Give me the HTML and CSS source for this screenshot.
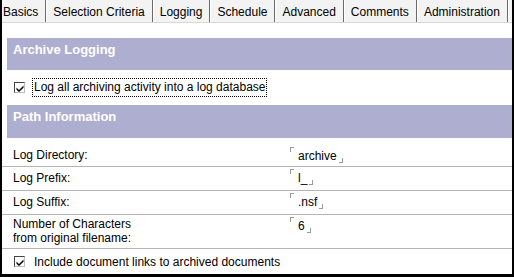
FILE: index.html
```html
<!DOCTYPE html>
<html lang="en">
<head>
  <meta charset="UTF-8" />
  <title>Archive Settings - Logging</title>
  <link rel="stylesheet" href="styles.css">
</head>
<body>
  <div class="frame">
    <div class="tabs">
      <div class="tab first">Basics</div>
      <div class="tab">Selection Criteria</div>
      <div class="tab active">Logging</div>
      <div class="tab">Schedule</div>
      <div class="tab">Advanced</div>
      <div class="tab">Comments</div>
      <div class="tab">Administration</div>
    </div>

    <div class="content">
      <div class="band">Archive Logging</div>
      <div class="check-row main-check">
        <span class="checkbox"><svg width="8" height="8" viewBox="0 0 8 8"><path d="M0.5 3.5 L3 6 L7.5 1.5 L7.5 3.8 L3 8 L0.5 5.8 Z" fill="#000"/></svg></span>
        <span class="focus">Log all archiving activity into a log database</span>
      </div>

      <div class="band second">Path Information</div>
      <div class="row first-row">
        <div class="label">Log Directory:</div>
        <div class="value"><span class="tl"></span>archive<span class="br"></span></div>
      </div>
      <div class="row">
        <div class="label">Log Prefix:</div>
        <div class="value"><span class="tl"></span>l_<span class="br"></span></div>
      </div>
      <div class="row">
        <div class="label">Log Suffix:</div>
        <div class="value"><span class="tl"></span>.nsf<span class="br"></span></div>
      </div>
      <div class="row tall">
        <div class="label">Number of Characters<br>from original filename:</div>
        <div class="value"><span class="tl"></span>6<span class="br"></span></div>
      </div>
      <div class="check-row last">
        <span class="checkbox"><svg width="8" height="8" viewBox="0 0 8 8"><path d="M0.5 3.5 L3 6 L7.5 1.5 L7.5 3.8 L3 8 L0.5 5.8 Z" fill="#000"/></svg></span>
        <span>Include document links to archived documents</span>
      </div>
    </div>
  </div>
</body>
</html>
```

FILE: styles.css
```css
html, body {
  margin: 0;
  padding: 0;
}
body {
  font-family: "Liberation Sans", Arial, sans-serif;
  font-size: 12px;
  color: #000;
  background: #fff;
}
.frame {
  width: 514px;
  height: 277px;
  box-sizing: border-box;
  border-left: 2px solid #000;
  border-right: 2px solid #000;
  border-bottom: 3px solid #000;
  display: flex;
  flex-direction: column;
  overflow: hidden;
}
.tabs {
  display: flex;
  flex: none;
  height: 22px;
  background: #f3f3f3;
  border-bottom: 1px solid #d8d8d8;
  margin-left: -2px;
}
.tab {
  flex: none;
  white-space: nowrap;
  padding: 0 7px 0 6px;
  line-height: 24px;
  font-size: 12px;
  border-right: 1px solid #6a6a6a;
  box-shadow: 1px 0 0 #fff;
  margin-right: 1px;
}
.tab.first {
  padding-left: 3px;
}
.content {
  flex: none;
  padding-top: 15px;
}
.band {
  margin-left: 5px;
  height: 32px;
  background: #aeaed0;
  color: #fff;
  font-weight: bold;
  font-size: 13px;
  padding: 4px 0 0 6px;
  box-sizing: border-box;
}
.band.second {
  height: 33px;
}
.check-row {
  display: flex;
  align-items: center;
  gap: 8px;
  padding-left: 12px;
}
.main-check {
  height: 35px;
}
.check-row.last {
  height: 25px;
  border-top: 1px solid #b4b4b4;
  gap: 9px;
}
.checkbox {
  width: 11px;
  height: 11px;
  box-sizing: border-box;
  border: 1px solid #444;
  border-right-color: #bbb;
  border-bottom-color: #bbb;
  background: #fff;
  display: flex;
  align-items: center;
  justify-content: center;
}
.focus {
  border: 1px dotted #000;
  padding: 1px 1px 2px 1px;
  margin-left: -1px;
}
.row {
  display: flex;
  height: 23px;
  border-top: 1px solid #b4b4b4;
}
.row.first-row {
  border-top: none;
  height: 28px;
}
.row.tall {
  height: 33px;
}
.label {
  width: 277px;
  padding: 4px 0 0 11px;
  line-height: 14px;
}
.row.first-row .label {
  padding-top: 10px;
}
.row.tall .label {
  padding-top: 2px;
}
.value {
  padding-top: 2px;
  line-height: 14px;
}
.row.first-row .value {
  padding-top: 9px;
}
.tl,
.br {
  display: inline-block;
  width: 4px;
  height: 5px;
  box-sizing: border-box;
  border-color: #9a9a9a;
  border-style: solid;
  border-width: 0;
}
.tl {
  border-left-width: 1px;
  border-top-width: 1px;
  vertical-align: 8px;
  margin-right: 4px;
}
.br {
  border-right-width: 1px;
  border-bottom-width: 1px;
  vertical-align: -3px;
  margin-left: 2px;
}
```
